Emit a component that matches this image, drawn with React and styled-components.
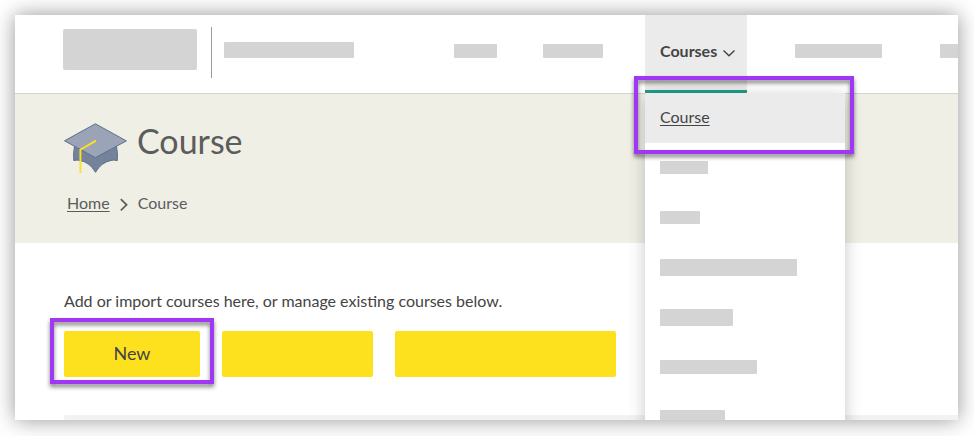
import React from 'react';
import styled, { createGlobalStyle } from 'styled-components';

const GlobalStyle = createGlobalStyle`
  *,
  *::before,
  *::after {
    box-sizing: border-box;
  }

  body {
    margin: 0;
    background: #fff;
    color: #444;
    font-family: Lato, 'Liberation Sans', sans-serif;
    font-size: 16px;
    line-height: 20px;
  }

  button {
    font: inherit;
    color: inherit;
    border: 0;
    cursor: pointer;
  }

  a {
    color: inherit;
    text-underline-offset: 2px;
  }
`;

const Page = styled.div`
  display: flex;
  min-height: 100vh;
  padding: 15px 16px 16px 15px;
`;

const Shell = styled.div`
  flex: 1;
  min-width: 0;
  display: flex;
  flex-direction: column;
  background: #fff;
  box-shadow: 0 0 20px rgba(0, 0, 0, 0.42);
  overflow: hidden;
`;

const Placeholder = styled.span`
  display: block;
  flex-shrink: 0;
  width: ${(props) => props.$width}px;
  height: ${(props) => props.$height || 14}px;
  border-radius: 1px;
  background: #d4d4d4;
`;

// Header
const Header = styled.header`
  display: flex;
  align-items: center;
  height: 79px;
  padding-left: 48px;
  border-bottom: 1px solid #d4d4d4;
`;

const Brand = styled.div`
  display: flex;
  align-items: center;
  flex-shrink: 0;
  padding-bottom: 9px;
`;

const Logo = styled.div`
  width: 134px;
  height: 41px;
  border-radius: 2px;
  background: #d4d4d4;
`;

const Divider = styled.div`
  width: 1px;
  height: 51px;
  margin: 6px 12px 0 14px;
  background: #999c9e;
`;

const Nav = styled.nav`
  display: flex;
  align-items: center;
  align-self: stretch;
  margin-left: 100px;
`;

const NavItem = styled.div`
  flex-shrink: 0;
  margin-right: ${(props) => props.$gap}px;
  padding-bottom: 6px;
`;

const NavMenu = styled.div`
  position: relative;
  flex-shrink: 0;
  align-self: stretch;
  margin-right: 48px;
`;

const NavButton = styled.button`
  display: flex;
  align-items: center;
  gap: 6px;
  width: 102px;
  height: 78px;
  padding: 0 0 3px 15px;
  background: #ebebeb;
  border-bottom: 3px solid #219d89;
  font-weight: 700;
`;

const Menu = styled.ul`
  position: absolute;
  top: 100%;
  left: 0;
  z-index: 2;
  width: 200px;
  margin: 0;
  padding: 0;
  list-style: none;
  background: #fff;
  box-shadow: 0 4px 16px rgba(0, 0, 0, 0.22);
`;

const MenuItem = styled.li`
  position: relative;
  display: flex;
  align-items: center;
  height: 50px;
  padding: 0 15px 2px;
  background: ${(props) => (props.$active ? '#ebebeb' : '#fff')};
`;

const Highlight = styled.span`
  position: absolute;
  z-index: 3;
  inset: ${(props) => props.$inset};
  border: 4px solid #9f37f5;
  filter: drop-shadow(0 3px 2px rgba(0, 0, 0, 0.5));
  pointer-events: none;
`;

// Banner
const Banner = styled.section`
  height: 149px;
  padding: 29px 48px 0 49px;
  background: #efefe6;
  color: #5c5c5c;
`;

const TitleRow = styled.div`
  display: flex;
  gap: 10px;

  h1 {
    margin: 0;
    font-size: 34px;
    font-weight: 400;
    line-height: 36px;
  }
`;

const Breadcrumb = styled.nav`
  display: flex;
  align-items: center;
  gap: 9px;
  margin-top: 19px;
  padding-left: 3px;
`;

// Content
const Content = styled.main`
  flex: 1;
  display: flex;
  flex-direction: column;
  padding: 48px 0 0 49px;

  p {
    margin: 0;
  }
`;

const Actions = styled.div`
  display: flex;
  gap: 22px;
  margin-top: 20px;
`;

const ActionButton = styled.button`
  position: relative;
  width: ${(props) => props.$width}px;
  height: 46px;
  padding: 0 0 2px;
  border-radius: 2px;
  background: #fee11e;
  font-size: 18px;
`;

const Panel = styled.div`
  flex: 1;
  min-height: 5px;
  margin-top: 38px;
  border-radius: 2px 0 0 0;
  background: #f2f2f2;
`;

const CapIcon = () => (
  <svg width="63" height="51" viewBox="0 0 63 51" aria-hidden="true">
    <path
      d="M10.5 23 Q9 31 9.8 37.6 Q13 36.6 16 37.4 Q26 39.5 31.5 49.3 Q37 39.5 47 37.4 Q50 36.6 53.3 37.6 Q54 31 52.5 23 Z"
      fill="#74839b"
      stroke="#5e6f8a"
    />
    <path
      d="M0.5 17.8 L31.4 0.8 L62.4 17.9 L31.4 34.7 Z"
      fill="#9aa4b6"
      stroke="#5e6f8a"
    />
    <path
      d="M32 17.6 L16.4 26.8 V50"
      fill="none"
      stroke="#fee11e"
      strokeWidth="1.9"
    />
  </svg>
);

const ChevronDown = () => (
  <svg width="12" height="11" viewBox="0 0 12 11" aria-hidden="true">
    <path d="M0.5 4.5 L6 9.8 L11.5 4.5" fill="none" stroke="#444" strokeWidth="1.4" />
  </svg>
);

const ChevronRight = () => (
  <svg width="10" height="16" viewBox="0 0 10 16" aria-hidden="true">
    <path d="M1.8 4.2 L7.6 9.8 L1.8 15.4" fill="none" stroke="#5c5c5c" strokeWidth="1.7" />
  </svg>
);

const menuBars = [
  { id: 1, width: 48, height: 13 },
  { id: 2, width: 40, height: 13 },
  { id: 3, width: 137, height: 17 },
  { id: 4, width: 73, height: 17 },
  { id: 5, width: 97, height: 14 },
  { id: 6, width: 65, height: 14 },
];

const App = () => {
  return (
    <>
      <GlobalStyle />
      <Page>
        <Shell>
          <Header>
            <Brand>
              <Logo />
              <Divider />
              <Placeholder $width={130} $height={16} />
            </Brand>
            <Nav>
              <NavItem $gap={46}>
                <Placeholder $width={43} />
              </NavItem>
              <NavItem $gap={42}>
                <Placeholder $width={60} />
              </NavItem>
              <NavMenu>
                <NavButton type="button" aria-expanded="true">
                  Courses
                  <ChevronDown />
                </NavButton>
                <Menu>
                  <MenuItem $active>
                    <a href="#course">Course</a>
                    <Highlight $inset="-17px -9px -11px -11px" />
                  </MenuItem>
                  {menuBars.map((bar) => (
                    <MenuItem key={bar.id}>
                      <Placeholder $width={bar.width} $height={bar.height} />
                    </MenuItem>
                  ))}
                </Menu>
              </NavMenu>
              <NavItem $gap={58}>
                <Placeholder $width={87} />
              </NavItem>
              <NavItem $gap={0}>
                <Placeholder $width={60} />
              </NavItem>
            </Nav>
          </Header>
          <Banner>
            <TitleRow>
              <CapIcon />
              <h1>Course</h1>
            </TitleRow>
            <Breadcrumb>
              <a href="#home">Home</a>
              <ChevronRight />
              <span>Course</span>
            </Breadcrumb>
          </Banner>
          <Content>
            <p>Add or import courses here, or manage existing courses below.</p>
            <Actions>
              <ActionButton type="button" $width={136}>
                New
                <Highlight $inset="-13px -14px -7px -14px" />
              </ActionButton>
              <ActionButton type="button" $width={151} aria-label="Import" />
              <ActionButton type="button" $width={221} aria-label="Manage" />
            </Actions>
            <Panel />
          </Content>
        </Shell>
      </Page>
    </>
  );
};

export default App;
